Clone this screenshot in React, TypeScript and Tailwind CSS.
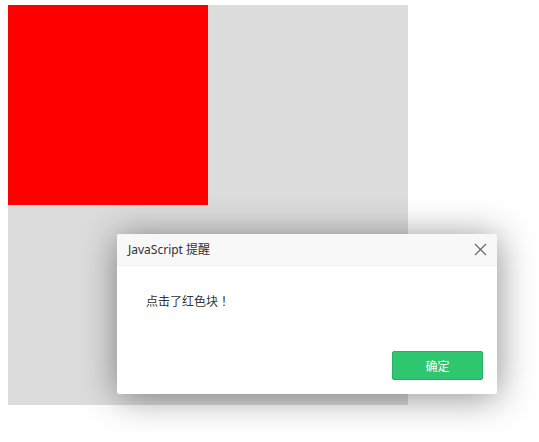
import React from 'react';

const font = { fontFamily: '"Noto Sans", "Noto Sans CJK SC", sans-serif' };
const cjk = { fontFamily: '"Noto Sans CJK SC", sans-serif' };
const jp = { fontFamily: '"Noto Sans CJK JP", sans-serif' };

const CloseIcon = () => (
  <svg width="13" height="13" viewBox="0 0 13 13" fill="none">
    <path d="M1 1L12 12M12 1L1 12" stroke="#666" strokeWidth="1.1" />
  </svg>
);

export default function App() {
  return (
    <div className="relative w-[539px] h-[442px] bg-white pl-[8px] pt-[5px]" style={font}>
      {/* 灰色容器 + 红色块 */}
      <div className="w-[400px] h-[400px] bg-[#dcdcdc]">
        <div className="w-[200px] h-[200px] bg-[#ff0000]" />
      </div>

      {/* 提醒弹窗 */}
      <div className="absolute left-[117px] top-[234px] w-[380px] h-[160px] bg-white rounded-[2px] shadow-[1px_3px_36px_rgba(0,0,0,0.45)] flex flex-col">
        <div className="h-[32px] bg-[#f8f8f8] border-b border-[#f0f0f0] flex items-center justify-between pl-[11px] pr-[10px] rounded-t-[2px]">
          <span className="text-[12px] text-[#333]">JavaScript 提醒</span>
          <CloseIcon />
        </div>
        <div className="flex-1 pl-[29px] pt-[26px] text-[12px] text-[#333]" style={cjk}>
          点击了红色块<span style={jp}>！</span>
        </div>
        <div className="flex justify-end pr-[14px] pb-[14px]">
          <button
            className="w-[91px] h-[29px] bg-[#2ec770] border border-[#27b063] rounded-[2px] text-white text-[12px] leading-none"
            style={cjk}
          >
            确定
          </button>
        </div>
      </div>
    </div>
  );
}
